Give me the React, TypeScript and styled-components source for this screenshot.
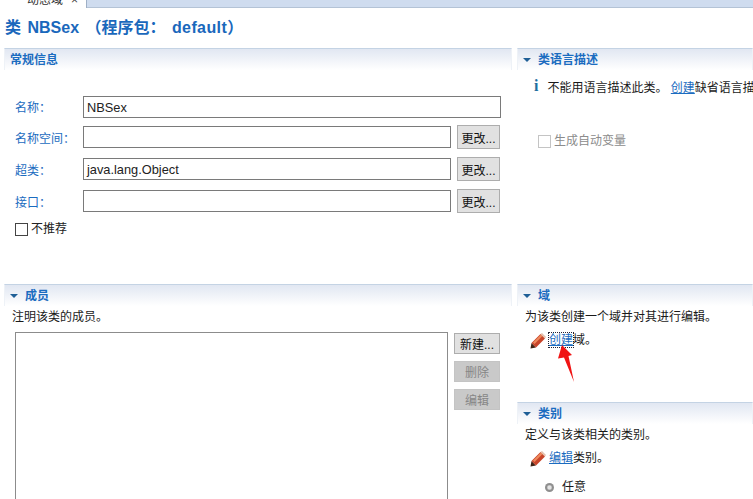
import React from "react";
import styled, { createGlobalStyle } from "styled-components";

const GlobalStyle = createGlobalStyle`
  html, body { margin: 0; padding: 0; background: #fff; }
  body { font-family: "Liberation Sans", "Noto Sans CJK SC", sans-serif; font-size: 12px; color: #1a1a1a; }
`;

const Page = styled.div`
  position: relative;
  width: 753px;
  height: 499px;
  overflow: hidden;
  background: #fff;
`;

const TabBar = styled.div`
  display: flex;
  height: 7px;
  background: #cfdcef;
  border-bottom: 1px solid #b4c3d6;
`;

const TabStrip = styled.div`
  display: flex;
  gap: 8px;
  width: 87px;
  height: 8px;
  flex: none;
  overflow: hidden;
  background: #fff;
  border-right: 1px solid #9fb0c6;
  box-sizing: border-box;
  font-size: 12px;
  line-height: 1px;
  padding-left: 27px;
  color: #333;
  white-space: nowrap;
`;

const Title = styled.h1`
  margin: 0;
  height: 40px;
  padding-left: 5px;
  font-size: 16px;
  line-height: 39px;
  font-weight: 700;
  word-spacing: 2px;
  color: #1a68bc;
  white-space: pre;
`;

const TitleLatin = styled.span`
  letter-spacing: 0.4px;
`;

const Columns = styled.div`
  display: grid;
  grid-template-columns: 508px 236px;
  grid-template-rows: 236px auto;
  column-gap: 5px;
  padding-left: 4px;
`;

const Section = styled.section`
  min-width: 0;
  overflow: hidden;
`;

const SectionHeader = styled.div`
  display: flex;
  align-items: center;
  gap: 7px;
  height: 21px;
  padding-left: 5px;
  border-top: 1px solid #c4d3e4;
  border-left: 1px solid #eef2f7;
  border-right: 1px solid #eef2f7;
  background: linear-gradient(#e1e7f2, #ffffff);
  color: #1b6cc0;
  font-size: 12px;
  font-weight: 700;
  line-height: 20px;
`;

const Twisty = styled.span`
  width: 0;
  height: 0;
  border-left: 4px solid transparent;
  border-right: 4px solid transparent;
  border-top: 4px solid #1f5f96;
`;

const FormGrid = styled.div`
  display: grid;
  grid-template-columns: 68px 368px 50px;
  grid-template-rows: 20px repeat(3, 22px);
  row-gap: 10px;
  align-items: center;
  padding: 26px 0 0 11px;
`;

const FieldLabel = styled.label`
  color: #1b6cc0;
  font-size: 12px;
`;

const TextField = styled.div`
  height: 22px;
  box-sizing: border-box;
  border: 1px solid #7a7a7a;
  padding-left: 3px;
  font-size: 12.8px;
  line-height: 21px;
  color: #222;
`;

const NameField = styled(TextField)`
  grid-column: 2 / span 2;
  align-self: start;
`;

const PushButton = styled.button`
  width: 43px;
  height: 24px;
  padding: 0;
  margin-left: 6px;
  border: 1px solid #adadad;
  background: #e1e1e1;
  color: #111;
  font-family: inherit;
  font-size: 12px;
  white-space: nowrap;
`;

const SideButton = styled(PushButton)<{ $disabled?: boolean }>`
  width: 46px;
  height: 21px;
  margin-left: 0;
  border-color: ${({ $disabled }) => ($disabled ? "#c4c4c4" : "#adadad")};
  background: ${({ $disabled }) => ($disabled ? "#c9c9c9" : "#e1e1e1")};
  color: ${({ $disabled }) => ($disabled ? "#868686" : "#111")};
`;

const CheckRow = styled.div<{ $muted?: boolean }>`
  display: flex;
  align-items: center;
  gap: 3px;
  color: ${({ $muted }) => ($muted ? "#8c8c8c" : "#222")};
  font-size: 12px;
  line-height: 14px;
`;

const CheckBox = styled.span<{ $muted?: boolean }>`
  width: 13px;
  height: 13px;
  box-sizing: border-box;
  border: 1px solid ${({ $muted }) => ($muted ? "#c4c4c4" : "#444")};
  background: #fff;
  flex: none;
`;

const DeprecatedRow = styled(CheckRow)`
  margin: 10px 0 0 11px;
`;

const Hint = styled.p`
  margin: 0;
  padding: 3px 0 0 8px;
  height: 22px;
  box-sizing: border-box;
  line-height: 17px;
  font-size: 12px;
  white-space: nowrap;
`;

const MembersBody = styled.div`
  display: flex;
  gap: 6px;
  padding: 4px 0 0 11px;
`;

const MembersList = styled.div`
  width: 433px;
  height: 240px;
  box-sizing: border-box;
  border: 1px solid #8c8c8c;
  flex: none;
`;

const ButtonColumn = styled.div`
  display: flex;
  flex-direction: column;
  gap: 7px;
  padding-top: 1px;
`;

const InfoRow = styled.div`
  display: flex;
  align-items: center;
  gap: 9px;
  padding: 7px 0 0 17px;
  height: 18px;
  white-space: nowrap;
  font-size: 12px;
`;

const InfoMark = styled.span`
  font-family: "Liberation Serif", serif;
  font-size: 16px;
  font-weight: 700;
  color: #1f6f9f;
  width: 6px;
`;

const Link = styled.a<{ $focused?: boolean }>`
  color: #1b6cc0;
  text-decoration: underline;
  outline: ${({ $focused }) => ($focused ? "1px dotted #223" : "none")};
`;

const AutoVarRow = styled(CheckRow)`
  margin: 39px 0 0 21px;
`;

const ActionRow = styled.div`
  display: flex;
  align-items: center;
  gap: 3px;
  padding: 4px 0 0 13px;
  height: 17px;
  line-height: 17px;
  white-space: nowrap;
  font-size: 12px;
`;

const FieldBlock = styled.div`
  height: 118px;
`;

const RadioRow = styled.div`
  display: flex;
  align-items: center;
  gap: 8px;
  padding: 12px 0 0 28px;
  font-size: 12px;
  line-height: 17px;
`;

const RadioDot = styled.span`
  width: 9px;
  height: 9px;
  border-radius: 50%;
  background: radial-gradient(circle, #e4e4e4 0 1.5px, #8f8f8f 3px);
`;

const ArrowOverlay = styled.svg`
  position: absolute;
  left: 555px;
  top: 344px;
  width: 22px;
  height: 40px;
`;

const Pencil = () => (
  <svg width="16" height="16" viewBox="0 0 16 16" aria-hidden="true">
    <path d="M0.5 15.5 L1.5 10 L6 14.5 Z" fill="#3f2416" />
    <path d="M1.5 10 L10.5 1 L15 5.5 L6 14.5 Z" fill="#c8452a" />
    <path d="M3 9.5 L11 1.5 L12.5 3 L4.5 11 Z" fill="#ee8a5c" />
    <path d="M10.5 1 L12 0 L16 4 L15 5.5 Z" fill="#e4c0ac" />
  </svg>
);

const App = () => {
  return (
    <Page>
      <GlobalStyle />
      <TabBar>
        <TabStrip>
          <span>动态域</span>
          <span>× </span>
        </TabStrip>
      </TabBar>
      <Title>
        类 NBSex （程序包： <TitleLatin>default</TitleLatin>）
      </Title>
      <Columns>
        <Section>
          <SectionHeader>常规信息</SectionHeader>
          <FormGrid>
            <FieldLabel>名称：</FieldLabel>
            <NameField>NBSex</NameField>
            <FieldLabel>名称空间：</FieldLabel>
            <TextField />
            <PushButton>更改...</PushButton>
            <FieldLabel>超类：</FieldLabel>
            <TextField>java.lang.Object</TextField>
            <PushButton>更改...</PushButton>
            <FieldLabel>接口：</FieldLabel>
            <TextField />
            <PushButton>更改...</PushButton>
          </FormGrid>
          <DeprecatedRow>
            <CheckBox />
            不推荐
          </DeprecatedRow>
        </Section>
        <Section>
          <SectionHeader>
            <Twisty />
            类语言描述
          </SectionHeader>
          <InfoRow>
            <InfoMark>i</InfoMark>
            <span>
              不能用语言描述此类。 <Link>创建</Link>缺省语言描
            </span>
          </InfoRow>
          <AutoVarRow $muted>
            <CheckBox $muted />
            生成自动变量
          </AutoVarRow>
        </Section>
        <Section>
          <SectionHeader>
            <Twisty />
            成员
          </SectionHeader>
          <Hint>注明该类的成员。</Hint>
          <MembersBody>
            <MembersList />
            <ButtonColumn>
              <SideButton>新建...</SideButton>
              <SideButton $disabled>删除</SideButton>
              <SideButton $disabled>编辑</SideButton>
            </ButtonColumn>
          </MembersBody>
        </Section>
        <Section>
          <FieldBlock>
            <SectionHeader>
              <Twisty />
              域
            </SectionHeader>
            <Hint>为该类创建一个域并对其进行编辑。</Hint>
            <ActionRow>
              <Pencil />
              <span>
                <Link $focused>创建</Link>域。
              </span>
            </ActionRow>
          </FieldBlock>
          <SectionHeader>
            <Twisty />
            类别
          </SectionHeader>
          <Hint>定义与该类相关的类别。</Hint>
          <ActionRow>
            <Pencil />
            <span>
              <Link>编辑</Link>类别。
            </span>
          </ActionRow>
          <RadioRow>
            <RadioDot />
            任意
          </RadioRow>
        </Section>
      </Columns>
      <ArrowOverlay viewBox="0 0 22 40" aria-hidden="true">
        <path d="M7 1 L17 11 L13.5 12 L19 38 L9 13.5 L3 14.5 Z" fill="#f01414" />
      </ArrowOverlay>
    </Page>
  );
};

export default App;
